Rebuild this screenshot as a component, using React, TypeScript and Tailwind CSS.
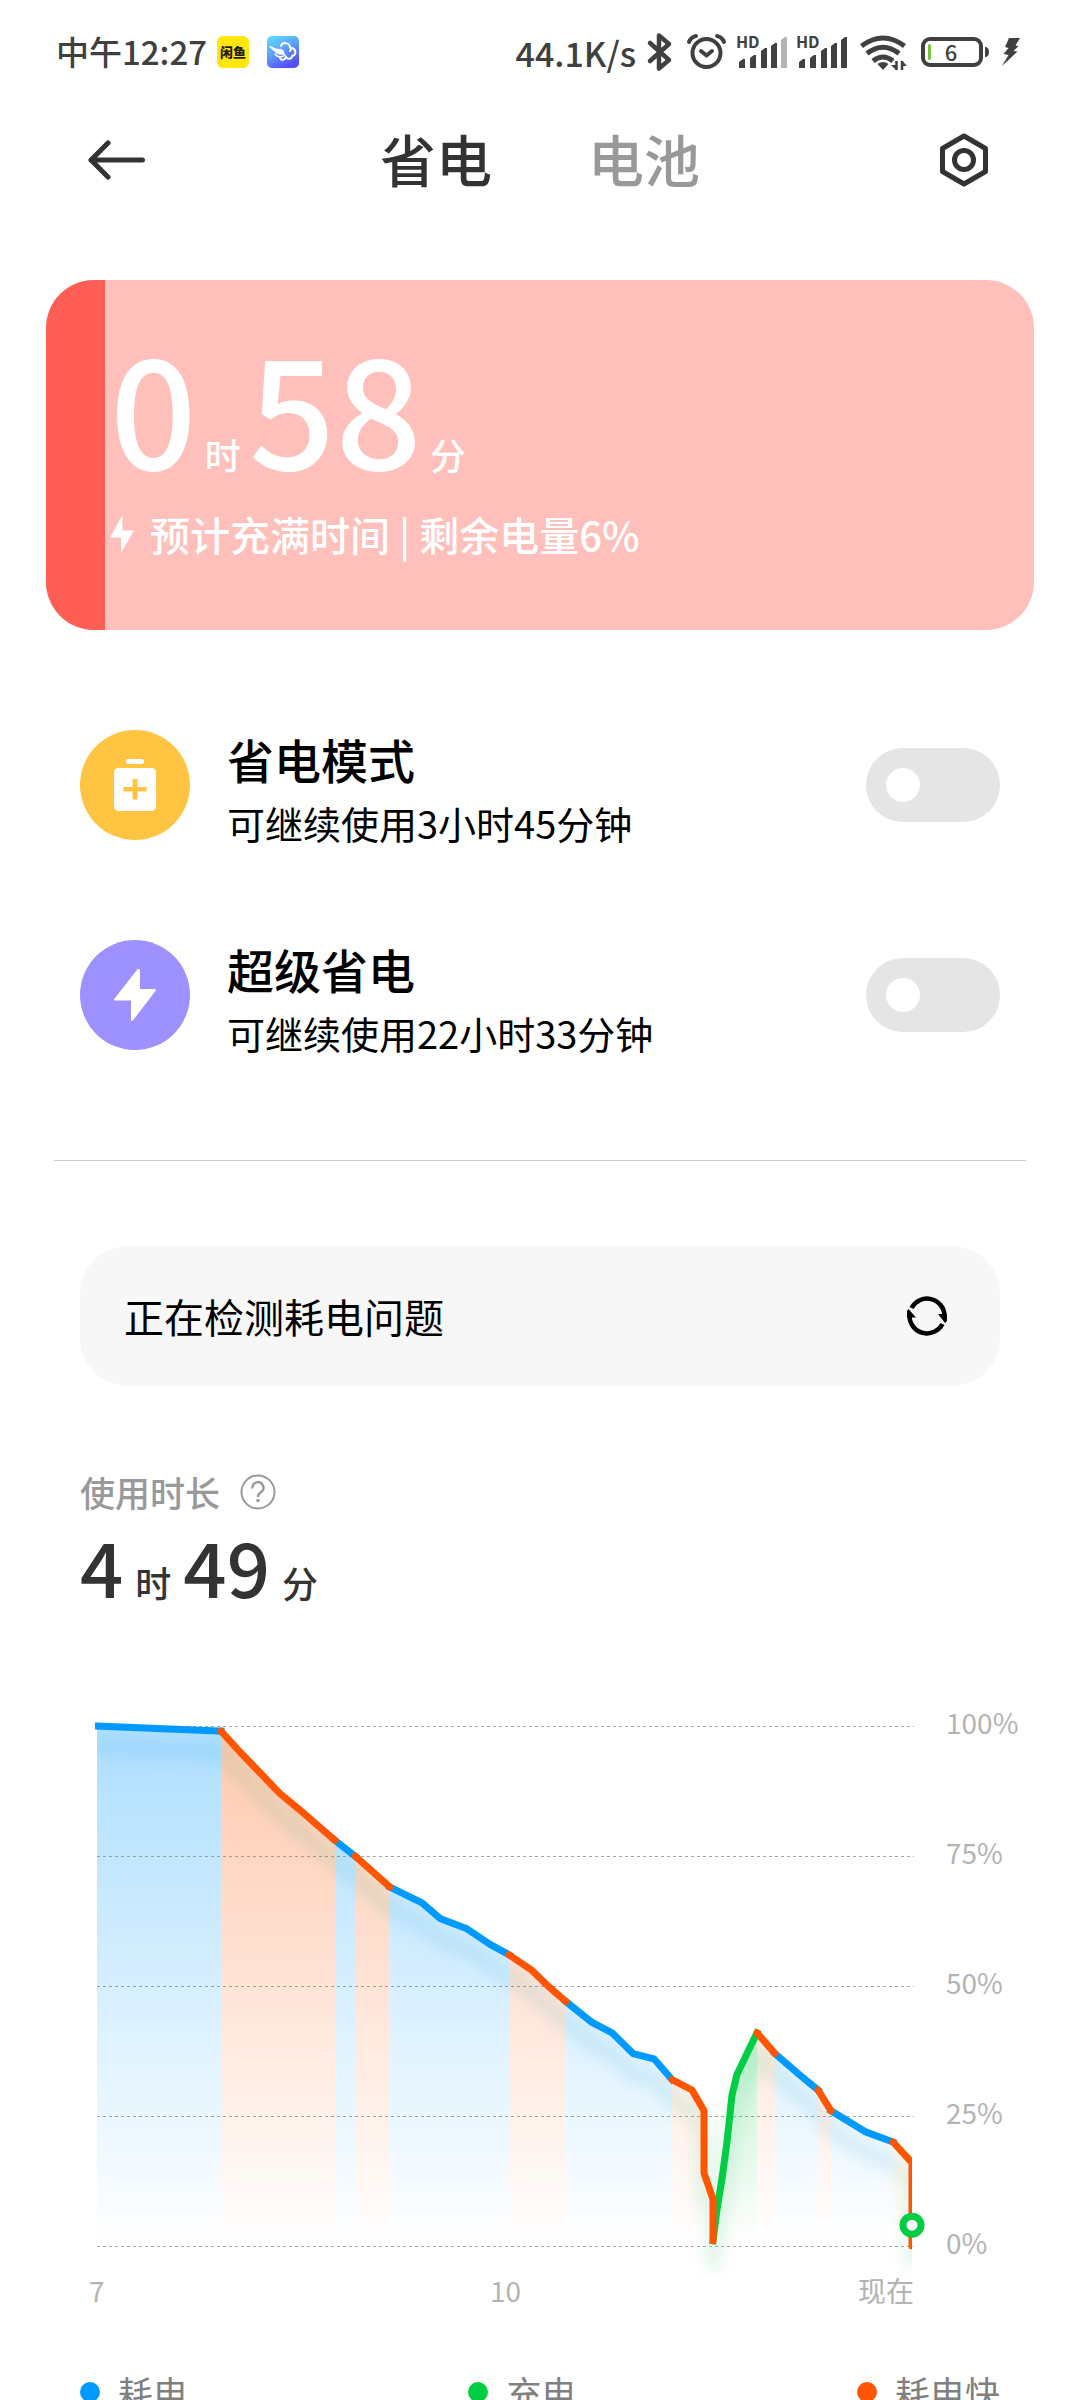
import { useState } from 'react';
import type { ReactNode } from 'react';

type Kind = 'use' | 'charge' | 'fast';

interface Segment {
  kind: Kind;
  points: [number, number][];
}

const COLORS: Record<Kind, string> = {
  use: '#0099ff',
  charge: '#00cc44',
  fast: '#ff5500',
};

const PLOT_W = 817;
const PLOT_H = 520;
const NOW_X = 815;

// [x in the plot, battery level in percent]
const SEGMENTS: Segment[] = [
  { kind: 'use', points: [[0, 100], [124, 99]] },
  { kind: 'fast', points: [[124, 99], [143, 95], [163, 91], [183, 87], [202, 84], [220, 81], [238, 78]] },
  { kind: 'use', points: [[238, 78], [258, 75]] },
  { kind: 'fast', points: [[258, 75], [293, 69]] },
  { kind: 'use', points: [[293, 69], [325, 66], [343, 63], [370, 61], [393, 58], [412, 56]] },
  { kind: 'fast', points: [[412, 56], [435, 53], [451, 50], [469, 47]] },
  { kind: 'use', points: [[469, 47], [495, 43], [515, 41], [536, 37], [557, 36], [575, 32]] },
  { kind: 'fast', points: [[575, 32], [595, 30], [607, 26], [607, 14], [616, 9], [616, 1]] },
  { kind: 'charge', points: [[616, 1], [620, 7], [625, 13], [630, 20], [635, 29], [640, 33], [660, 41]] },
  { kind: 'fast', points: [[660, 41], [678, 37]] },
  { kind: 'use', points: [[678, 37], [702, 33], [721, 30]] },
  { kind: 'fast', points: [[721, 30], [734, 26]] },
  { kind: 'use', points: [[734, 26], [768, 22], [796, 20]] },
  { kind: 'fast', points: [[796, 20], [NOW_X, 16], [NOW_X, 0]] },
];

const LEGEND: { kind: Kind; label: string }[] = [
  { kind: 'use', label: '耗电' },
  { kind: 'charge', label: '充电' },
  { kind: 'fast', label: '耗电快' },
];

const levelY = (level: number) => ((100 - level) * PLOT_H) / 100;

const toPath = (points: [number, number][]) =>
  points.map(([x, level], i) => `${i ? 'L' : 'M'}${x} ${levelY(level)}`).join(' ');

const toArea = (points: [number, number][]) =>
  `${toPath(points)} L${points[points.length - 1][0]} ${PLOT_H} L${points[0][0]} ${PLOT_H} Z`;

function Signal({ weak }: { weak?: boolean }) {
  const bars = [
    [1, 27],
    [12, 23],
    [23, 16],
    [33, 11],
    [43, 5],
  ];
  return (
    <svg className="overflow-visible" width="50" height="40" viewBox="0 0 50 40" fill="#404040">
      <text x="-2" y="16" fontSize="16" fontWeight="600">HD</text>
      {bars.map(([x, top], i) => (
        <path
          key={x}
          d={`M${x} 36 V${top + 3} L${x + 4} ${top} H${x + 6} V36 Z`}
          fill={weak && i === 4 ? '#b3b3b3' : '#404040'}
        />
      ))}
    </svg>
  );
}

function StatusBar() {
  return (
    <div className="flex h-[104px] items-center justify-between pl-14 pr-[60px] text-[33px] font-medium text-[#404040]">
      <div className="flex items-center">
        <span>中午12:27</span>
        <span className="ml-[10px] flex size-8 items-center justify-center rounded-md bg-[#ffe60f] text-[13px] font-black text-[#1f1a00]">
          闲鱼
        </span>
        <svg className="ml-[18px]" width="32" height="32" viewBox="0 0 32 32">
          <defs>
            <linearGradient id="cloudApp" x1="0" y1="0" x2="0.5" y2="1">
              <stop offset="0" stopColor="#5be0fa" />
              <stop offset="0.5" stopColor="#5fa4fb" />
              <stop offset="1" stopColor="#5450f6" />
            </linearGradient>
          </defs>
          <rect width="32" height="32" rx="5" fill="url(#cloudApp)" />
          <path d="M2 10 C6 10 7 13 12 13 C16 13 17 15 18 18 C14 20 10 18 8 16 C6 14 3 12 2 10 Z" fill="#fff" />
          <path d="M8 18 C10 21 15 22 18 19" fill="none" stroke="#fff" strokeWidth="1.5" strokeLinecap="round" />
          <path
            d="M14 10 C15 6 22 6 23 11 C24 12 24 14 23 15 M25 12 C29 13 30 19 25 20 C25 23 21 24 19 21 C18 24 14 25 13 22"
            fill="none"
            stroke="#fff"
            strokeWidth="2"
            strokeLinecap="round"
          />
        </svg>
      </div>
      <div className="flex items-center gap-[10px]">
        <span className="text-[34px]">44.1K/s</span>
        <svg width="28" height="40" viewBox="0 0 28 40" fill="none" stroke="#404040" strokeWidth="4.5" strokeLinecap="round" strokeLinejoin="round">
          <path d="M4 11 L23 28 L13 36.5 V3.5 L23 12 L4 29" />
        </svg>
        <svg width="44" height="40" viewBox="0 0 44 40" fill="none" stroke="#404040" strokeWidth="4" strokeLinecap="round" strokeLinejoin="round">
          <circle cx="22.5" cy="21" r="14" />
          <path d="M17 19 L22.5 23.5 L28 19" />
          <path d="M5 10 Q7 5 12 4 M40 10 Q38 5 33 4" />
        </svg>
        <Signal weak />
        <Signal />
        <svg width="50" height="40" viewBox="0 0 50 40" fill="none" stroke="#404040" strokeWidth="5">
          <path d="M3.5 14 Q25 -2 46.500 14" />
          <path d="M9 21.500 Q25 9 41 21.500" />
          <path d="M15 29 Q25 21 35 29" />
          <path d="M19.500 32 Q25 28 30.500 32 L25 38 Z" fill="#404040" stroke="none" />
          <path d="M38.500 29 V38 M44 38 V29" strokeWidth="2.5" />
          <path d="M33 33 H38.500 V38.500 Z M44 28.500 V34 H49 Z" fill="#404040" stroke="none" />
        </svg>
        <svg width="72" height="40" viewBox="0 0 72 40" fill="#404040">
          <rect x="5" y="7" width="58" height="26" rx="7" fill="none" stroke="#404040" strokeWidth="4" />
          <path d="M67 15 Q71 15 71 20 Q71 25 67 25 Z" />
          <rect x="10" y="12" width="3" height="16" rx="1.5" fill="#76c442" />
          <text x="33" y="29" fontSize="22" fontWeight="500" textAnchor="middle">6</text>
        </svg>
        <svg width="20" height="40" viewBox="0 0 20 40" fill="#404040">
          <path d="M9 6 H20 L15.500 13.500 L18.500 14 L13.500 19 L17.500 19.500 L2 34 L8.500 23 L3.500 22 L8.500 16 L5 15 Z" />
        </svg>
      </div>
    </div>
  );
}

function TopBar() {
  const [tab, setTab] = useState('省电');
  return (
    <header className="flex h-28 items-center justify-between px-[88px] text-[#333]">
      <button aria-label="返回" className="w-[60px]">
        <svg width="58" height="40" viewBox="0 0 58 40" fill="none" stroke="currentColor" strokeWidth="5" strokeLinecap="round" strokeLinejoin="round">
          <path d="M54.500 20 H3 M20 3 L3 20 L20 37" />
        </svg>
      </button>
      <nav className="flex gap-24 pb-1">
        {['省电', '电池'].map((name) => (
          <button
            key={name}
            onClick={() => setTab(name)}
            className={`text-[56px] leading-[80px] font-medium ${tab === name ? 'text-[#333]' : 'text-[#999]'}`}
          >
            {name}
          </button>
        ))}
      </nav>
      <button aria-label="设置" className="flex w-[60px] justify-end">
        <svg width="56" height="56" viewBox="0 0 56 56" fill="none" stroke="currentColor" strokeWidth="5" strokeLinejoin="round">
          <path d="M28 4 L49.500 16.500 V39.500 L28 52 L6.500 39.500 V16.500 Z" />
          <circle cx="28" cy="28" r="9.500" />
        </svg>
      </button>
    </header>
  );
}

function ChargeCard({ level }: { level: number }) {
  return (
    <section className="relative mx-[46px] mt-16 overflow-hidden rounded-[48px] bg-[#ffbfba] pt-12 pb-[68px] pl-16 font-medium text-white">
      <div className="absolute inset-y-0 left-0 bg-[#ff5e57]" style={{ width: `${level}%` }} />
      <div className="relative flex items-baseline">
        <span className="text-[152px] leading-none">0</span>
        <span className="ml-2 text-[36px] leading-none">时</span>
        <span className="ml-2 text-[152px] leading-none">58</span>
        <span className="ml-2 text-[36px] leading-none">分</span>
      </div>
      <div className="relative mt-[26px] flex items-center text-[40px] leading-[56px]">
        <svg width="24" height="38" viewBox="0 0 24 38" fill="currentColor">
          <path d="M12.500 0 V15.500 H24 L11 38 V22.500 H0 Z" />
        </svg>
        <p className="ml-4">预计充满时间 | 剩余电量{level}%</p>
      </div>
    </section>
  );
}

interface ModeRowProps {
  id: string;
  title: string;
  detail: string;
  badge: string;
  icon: ReactNode;
}

function ModeRow({ id, title, detail, badge, icon }: ModeRowProps) {
  const [on, setOn] = useState(false);
  return (
    <div className="flex h-[110px] items-center text-black">
      <div className={`flex size-[110px] shrink-0 items-center justify-center rounded-full ${badge}`}>{icon}</div>
      <label htmlFor={id} className="ml-[37px] flex-1 pt-3">
        <span className="block text-[47px] leading-[64px] font-medium">{title}</span>
        <span className="block text-[38px] leading-[64px]">{detail}</span>
      </label>
      <input
        id={id}
        type="checkbox"
        role="switch"
        checked={on}
        onChange={(e) => setOn(e.target.checked)}
        className="flex h-[74px] w-[134px] shrink-0 appearance-none items-center rounded-full bg-[#e5e5e5] px-5 before:block before:size-[34px] before:rounded-full before:bg-white checked:justify-end checked:bg-[#0099ff]"
      />
    </div>
  );
}

function BatteryChart() {
  const ordered = [...SEGMENTS.filter((s) => s.kind !== 'fast'), ...SEGMENTS.filter((s) => s.kind === 'fast')];
  const whole = SEGMENTS.flatMap((s) => s.points);

  return (
    <div className="mt-[123px] flex gap-8 pl-[97px] text-[28px] leading-10 text-[#b3b3b3]">
      <div className="min-w-0 flex-1">
        <svg className="block h-auto w-full overflow-visible" viewBox={`0 0 ${PLOT_W} ${PLOT_H}`}>
          <defs>
            <linearGradient id="fill-use" gradientUnits="userSpaceOnUse" x1="0" y1="0" x2="0" y2={PLOT_H}>
              <stop offset="0" stopColor={COLORS.use} stopOpacity="0.32" />
              <stop offset="1" stopColor={COLORS.use} stopOpacity="0" />
            </linearGradient>
            <linearGradient id="fill-fast" gradientUnits="userSpaceOnUse" x1="0" y1="0" x2="0" y2={PLOT_H}>
              <stop offset="0" stopColor={COLORS.fast} stopOpacity="0.32" />
              <stop offset="1" stopColor={COLORS.fast} stopOpacity="0" />
            </linearGradient>
            <linearGradient id="fill-charge" x1="0" y1="0" x2="0" y2="1">
              <stop offset="0" stopColor={COLORS.charge} stopOpacity="0.24" />
              <stop offset="1" stopColor={COLORS.charge} stopOpacity="0" />
            </linearGradient>
            {/* the glow turns from blue to green along the curve */}
            <linearGradient id="glow" gradientUnits="userSpaceOnUse" x1="0" y1="0" x2={PLOT_W} y2="0">
              <stop offset="0.14" stopColor="#0080e0" />
              <stop offset="0.16" stopColor="#20a060" />
              <stop offset="0.35" stopColor="#20a080" />
              <stop offset="0.37" stopColor="#0090c0" />
              <stop offset="0.69" stopColor="#0090c0" />
              <stop offset="0.73" stopColor="#00b040" />
              <stop offset="0.81" stopColor="#00b040" />
              <stop offset="0.85" stopColor="#0090c0" />
              <stop offset="0.97" stopColor="#0090c0" />
              <stop offset="0.98" stopColor="#00b040" />
            </linearGradient>
            <filter id="soft" filterUnits="userSpaceOnUse" x="-40" y="-40" width="900" height="640">
              <feGaussianBlur stdDeviation="7" />
            </filter>
            <clipPath id="plot">
              <rect x="-2" y="-10" width={NOW_X + 2} height={PLOT_H + 70} />
            </clipPath>
            <clipPath id="shade">
              <rect x="0" y="0" width={NOW_X} height={PLOT_H + 70} />
            </clipPath>
          </defs>

          {[100, 75, 50, 25, 0].map((level) => (
            <line
              key={level}
              x1="0"
              x2={PLOT_W}
              y1={levelY(level) + 0.5}
              y2={levelY(level) + 0.5}
              stroke="#a6a6a6"
              strokeDasharray="3 3"
            />
          ))}

          {SEGMENTS.map((s, i) => (
            <path key={i} d={toArea(s.points)} fill={`url(#fill-${s.kind})`} />
          ))}

          <g clipPath="url(#shade)">
            <path
              d={toPath(whole)}
              transform="translate(0 21)"
              fill="none"
              stroke="url(#glow)"
              strokeOpacity="0.1"
              strokeWidth="18"
              strokeLinejoin="round"
              filter="url(#soft)"
            />
          </g>

          <g clipPath="url(#plot)" fill="none" strokeWidth="7" strokeLinejoin="round">
            {ordered.map((s, i) => (
              <path
                key={i}
                d={toPath(s.points)}
                stroke={COLORS[s.kind]}
                strokeLinecap={s.kind === 'fast' ? 'round' : 'square'}
              />
            ))}
          </g>
          <circle cx={NOW_X} cy={levelY(4)} r="9" fill="#fff" stroke={COLORS.charge} strokeWidth="7" />
        </svg>
        <div className="mt-6 grid grid-cols-3">
          <span className="-ml-2">7</span>
          <span className="text-center">10</span>
          <span className="text-right">现在</span>
        </div>
      </div>
      {/* the bottom margin leaves out the hour labels under the plot */}
      <div className="-mt-6 mb-12 flex w-[134px] flex-col justify-between">
        {[100, 75, 50, 25, 0].map((level) => (
          <span key={level}>{level}%</span>
        ))}
      </div>
    </div>
  );
}

export default function App() {
  return (
    <main className="h-screen overflow-hidden bg-white font-['Noto_Sans_CJK_SC',sans-serif]">
      <StatusBar />
      <TopBar />
      <ChargeCard level={6} />

      <section className="mt-[100px] flex flex-col gap-[100px] px-20">
        <ModeRow
          id="saver"
          title="省电模式"
          detail="可继续使用3小时45分钟"
          badge="bg-[#ffc542]"
          icon={
            <svg width="42" height="52" viewBox="0 0 42 52" fill="#fff">
              <rect x="12" width="18" height="5" rx="2" />
              <path
                fillRule="evenodd"
                d="M5 9 H37 Q42 9 42 14 V47 Q42 52 37 52 H5 Q0 52 0 47 V14 Q0 9 5 9 Z M18.500 20 V28 H9.500 V32.500 H18.500 V40.500 H23.500 V32.500 H32.500 V28 H23.500 V20 Z"
              />
            </svg>
          }
        />
        <ModeRow
          id="super-saver"
          title="超级省电"
          detail="可继续使用22小时33分钟"
          badge="bg-[#9d91ff]"
          icon={
            <svg width="42" height="52" viewBox="0 0 42 52" fill="#fff" stroke="#fff" strokeWidth="2" strokeLinejoin="round">
              <path d="M25 1 V21 H41 L18 51 V30.500 H1 L24 1 Z" />
            </svg>
          }
        />
      </section>

      <hr className="mx-[54px] mt-[110px] border-[#ccc]" />

      <section className="mx-20 mt-[85px] flex h-[140px] items-center justify-between rounded-[48px] bg-[#f7f7f7] pr-[53px] pl-11 text-[40px] text-black">
        <p>正在检测耗电问题</p>
        <button aria-label="刷新">
          <svg width="40" height="40" viewBox="0 0 40 40" fill="none" stroke="#000" strokeWidth="4.5">
            <path d="M4.500 12 A17.500 17.500 0 0 1 37.500 20" />
            <path d="M35.500 28 A17.500 17.500 0 0 1 2.500 20" />
            <path d="M31 18 H40 V25 L38 27 Z M9 21.500 H0 V15 L1.500 13 Z" fill="#000" stroke="none" />
          </svg>
        </button>
      </section>

      <section className="mt-[86px]">
        <div className="px-20 font-medium">
          <div className="flex items-center gap-5 text-[35px] leading-10 text-[#999]">
            <h2>使用时长</h2>
            <button aria-label="说明">
              <svg width="36" height="36" viewBox="0 0 36 36" fill="none" stroke="currentColor" strokeWidth="2">
                <circle cx="18" cy="18" r="16.500" />
                <path d="M12.500 14.500 A5.500 5.500 0 1 1 20.500 18.500 Q18 20 18 23" strokeWidth="2.500" />
                <circle cx="18" cy="26.500" r="1.700" fill="currentColor" stroke="none" />
              </svg>
            </button>
          </div>
          <div className="mt-[15px] flex items-baseline gap-3 text-[36px] leading-none text-[#333]">
            <span className="text-[76px] leading-none">4</span>
            <span>时</span>
            <span className="text-[76px] leading-none">49</span>
            <span>分</span>
          </div>
        </div>
        <BatteryChart />
        <ul className="mt-[62px] flex justify-between px-20 text-[35px] leading-10 text-[#808080]">
          {LEGEND.map(({ kind, label }) => (
            <li key={kind} className="flex items-center">
              <span className="mr-[18px] size-5 rounded-full" style={{ background: COLORS[kind] }} />
              {label}
            </li>
          ))}
        </ul>
      </section>
    </main>
  );
}
